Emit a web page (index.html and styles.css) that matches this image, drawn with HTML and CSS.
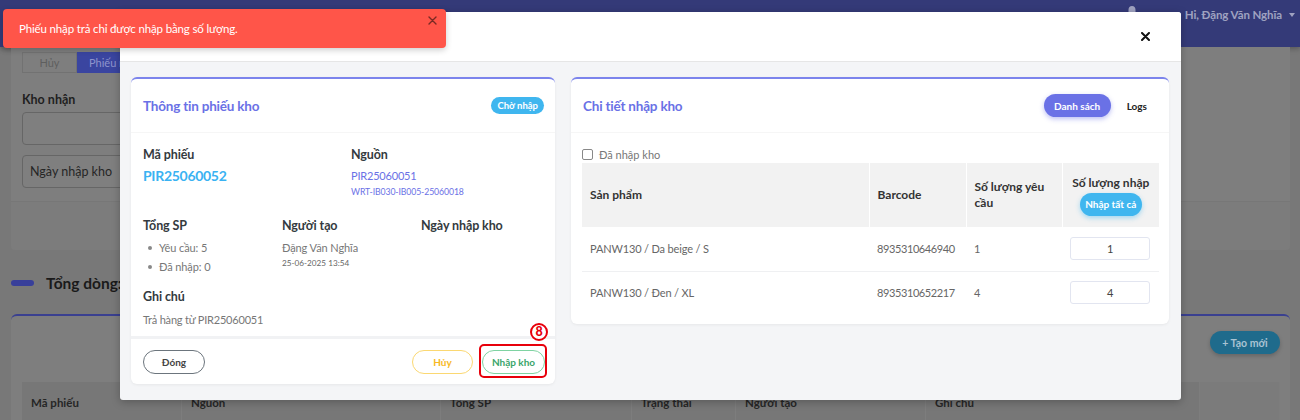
FILE: index.html
```html
<!DOCTYPE html>
<html lang="vi">
<head>
<meta charset="utf-8">
<title>Phiếu nhập kho</title>
<link rel="stylesheet" href="styles.css">
</head>
<body>
<div class="app">
  <header class="navbar">
    <svg class="nav-bell" width="12" height="14" viewBox="0 0 12 14"><path d="M6 1C3.8 1 2.5 2.7 2.5 4.8V8L1 10.5H11L9.5 8V4.8C9.5 2.7 8.2 1 6 1Z" fill="#9fa2c0"/><circle cx="6" cy="12" r="1.5" fill="#9fa2c0"/></svg>
    <div class="nav-user">Hi, Đặng Văn Nghĩa <span class="caret"></span></div>
  </header>
  <main class="content">
    <section class="filter-card">
      <div class="tabs">
        <button class="tab">Hủy</button>
        <button class="tab active">Phiếu nhập trả</button>
      </div>
      <div class="f-label">Kho nhận</div>
      <div class="f-input"></div>
      <div class="f-input">Ngày nhập kho</div>
    </section>
    <div class="total-row"><span class="pill"></span><span class="total-text">Tổng dòng: 2</span></div>
    <section class="list-card">
      <div class="list-tools"><button class="btn-new">+ Tạo mới</button></div>
      <div class="bg-table">
        <div class="bg-th w1">Mã phiếu</div>
        <div class="bg-th w2">Nguồn</div>
        <div class="bg-th w3">Tổng SP</div>
        <div class="bg-th w4">Trạng thái</div>
        <div class="bg-th w5">Người tạo</div>
        <div class="bg-th w6">Ghi chú</div>
        <div class="bg-th w7"></div>
      </div>
    </section>
  </main>
</div>

<div class="modal">
  <div class="modal-header">
    <button class="modal-close" aria-label="Đóng">
      <svg width="9" height="9" viewBox="0 0 9 9"><path d="M1 1L8 8M8 1L1 8" stroke="#111" stroke-width="2" stroke-linecap="round"/></svg>
    </button>
  </div>
  <div class="modal-body">
    <section class="card info-card">
      <div class="card-header">
        <h3 class="card-title">Thông tin phiếu kho</h3>
        <span class="badge">Chờ nhập</span>
      </div>
      <div class="card-body">
        <div class="row2">
          <div class="field">
            <div class="label">Mã phiếu</div>
            <div class="code-big">PIR25060052</div>
          </div>
          <div class="field">
            <div class="label">Nguồn</div>
            <div class="src-code">PIR25060051</div>
            <div class="src-sub">WRT-IB030-IB005-25060018</div>
          </div>
        </div>
        <div class="row3">
          <div class="field">
            <div class="label">Tổng SP</div>
            <ul class="bullets">
              <li>Yêu cầu: 5</li>
              <li>Đã nhập: 0</li>
            </ul>
          </div>
          <div class="field">
            <div class="label">Người tạo</div>
            <div class="creator">Đặng Văn Nghĩa</div>
            <div class="created-at">25-06-2025 13:54</div>
          </div>
          <div class="field">
            <div class="label">Ngày nhập kho</div>
          </div>
        </div>
        <div class="field note">
          <div class="label">Ghi chú</div>
          <div class="note-text">Trả hàng từ PIR25060051</div>
        </div>
      </div>
      <div class="card-footer">
        <button class="obtn obtn-grey">Đóng</button>
        <div class="footer-right">
          <button class="obtn obtn-yellow">Hủy</button>
          <button class="obtn obtn-green">Nhập kho</button>
        </div>
        <span class="mark-box"></span>
        <span class="mark-num">8</span>
      </div>
    </section>

    <section class="card detail-card">
      <div class="card-header">
        <h3 class="card-title">Chi tiết nhập kho</h3>
        <div class="seg">
          <button class="seg-btn active">Danh sách</button>
          <button class="seg-btn">Logs</button>
        </div>
      </div>
      <div class="card-body detail-body">
        <label class="check"><span class="box"></span>Đã nhập kho</label>
        <table class="dtable">
          <colgroup><col class="c1"><col class="c2"><col class="c3"><col class="c4"></colgroup>
          <thead>
            <tr>
              <th>Sản phẩm</th>
              <th>Barcode</th>
              <th>Số lượng yêu<br>cầu</th>
              <th class="th-qty">Số lượng nhập<br><button class="btn-all">Nhập tất cả</button></th>
            </tr>
          </thead>
          <tbody>
            <tr>
              <td>PANW130 / Da beige / S</td>
              <td class="num">8935310646940</td>
              <td>1</td>
              <td><div class="qty">1</div></td>
            </tr>
            <tr>
              <td>PANW130 / Đen / XL</td>
              <td class="num">8935310652217</td>
              <td>4</td>
              <td><div class="qty">4</div></td>
            </tr>
          </tbody>
        </table>
      </div>
    </section>
  </div>
</div>

<div class="toast">
  <span class="toast-text">Phiếu nhập trả chỉ được nhập bằng số lượng.</span>
  <span class="toast-x">
    <svg width="9" height="9" viewBox="0 0 9 9"><path d="M1 1L8 8M8 1L1 8" stroke="#7a2a24" stroke-width="1.4" stroke-linecap="round"/></svg>
  </span>
</div>
</body>
</html>
```

FILE: styles.css
```css
* { box-sizing: border-box; margin: 0; padding: 0; }
html, body { width: 1300px; height: 420px; overflow: hidden; }
body {
  font-family: Lato, "Noto Sans", "DejaVu Sans", sans-serif;
  background: #787878;
  color: #333;
  position: relative;
}
button { font-family: inherit; border: 0; background: none; cursor: pointer; }

/* ---------- dimmed background page ---------- */
.navbar {
  height: 47px;
  background: #343a78;
  display: flex;
  justify-content: flex-end;
  align-items: flex-start;
  padding: 7px 5px 0 0;
  box-shadow: 0 2px 5px rgba(0,0,0,.25);
}
.nav-bell { margin: -2px 47px 0 0; }
.nav-user { display: flex; align-items: center; gap: 7px; color: #9fa2c0; font-size: 11.5px; font-weight: 700; line-height: 16px; letter-spacing: -0.1px; }
.caret { width: 0; height: 0; border-left: 3px solid transparent; border-right: 3px solid transparent; border-top: 4px solid #9fa2c0; }

.content { padding: 0 10px 0 11px; }
.filter-card {
  background: #7e7e7e;
  height: 203px;
  border-radius: 0 0 4px 4px;
  padding: 5px 11px 0;
  background-image: linear-gradient(#7e7e7e 154px, #777 154px, #777 155px, #7c7c7c 155px);
}
.tabs { display: flex; height: 21px; }
.tab { width: 55px; border: 1px solid #727272; color: #5e5e5e; font-size: 11px; background: #7e7e7e; }
.tab.active { width: 100px; background: #3a45a0; color: #8e94cc; border-color: #3a45a0; text-align: left; padding-left: 11px; white-space: nowrap; }
.f-label { margin-top: 19px; font-size: 12.5px; font-weight: 700; color: #1f1f1f; line-height: 16px; }
.f-input { width: 420px; margin-top: 4px; height: 33px; border: 1px solid #666; border-radius: 4px; background: #7f7f7f; color: #262626; font-size: 12.5px; padding-left: 7px; display: flex; align-items: center; }
.f-input + .f-input { margin-top: 10px; }

.total-row { display: flex; align-items: center; gap: 12px; height: 20px; margin-top: 23px; }
.pill { width: 23px; height: 6px; border-radius: 3px; background: #383f9a; }
.total-text { font-size: 15.5px; font-weight: 700; color: #1a1a1a; }

.list-card {
  margin-top: 21px;
  background: #7e7e7e;
  border-top: 2px solid #3a4090;
  border-radius: 6px 6px 0 0;
  height: 200px;
  padding: 15px 10px 0 11px;
}
.list-tools { display: flex; justify-content: flex-end; height: 23px; }
.btn-new { width: 70px; height: 23px; border-radius: 12px; background: #1f6b8c; color: #a9c3d3; font-size: 10.5px; font-weight: 700; box-shadow: 0 2px 4px rgba(0,0,0,.2); }
.bg-table { margin-top: 28px; display: flex; background: #777; height: 45px; }
.bg-th { padding: 14px 0 0 9px; font-size: 11.5px; font-weight: 700; color: #262626; border-right: 1px solid #7d7d7d; }
.w1 { width: 160px; } .w2 { width: 259px; } .w3 { width: 191px; } .w4 { width: 104px; } .w5 { width: 190px; } .w6 { width: 274px; } .w7 { width: 80px; background: #7b7b7b; }

/* ---------- modal ---------- */
.modal {
  position: absolute;
  left: 120px; top: 12px;
  width: 1061px; height: 388px;
  background: #f4f5f7;
  border-radius: 3px;
  overflow: hidden;
  box-shadow: 0 2px 8px rgba(0,0,0,.25);
}
.modal-header {
  height: 50px;
  background: #fff;
  border-bottom: 1px solid #e6e6e6;
  display: flex;
  justify-content: flex-end;
  align-items: center;
  padding-right: 31px;
}
.modal-close { width: 10px; height: 10px; display: flex; align-items: center; justify-content: center; }
.modal-body {
  display: grid;
  grid-template-columns: 424px 598px;
  gap: 16px;
  align-items: start;
  padding: 15px 0 0 11px;
}

.card {
  background: #fff;
  border-top: 2px solid #7c84ec;
  border-radius: 6px;
  box-shadow: 0 1px 3px rgba(0,0,0,.06);
  position: relative;
}
.card-header {
  height: 54px;
  display: flex;
  justify-content: space-between;
  align-items: center;
  padding: 0 11px 0 12px;
  border-bottom: 1px solid #f6f6f6;
}
.card-title { font-size: 13.5px; font-weight: 700; color: #6a71e6; letter-spacing: -0.2px; }
.badge { background: #3fb6ef; color: #fff; font-size: 9.5px; font-weight: 700; height: 17px; padding: 0 6px; border-radius: 9px; display: flex; align-items: center; }

.card-body { padding: 13px 12px 7px; }
.label { font-size: 12.5px; font-weight: 700; color: #343a40; line-height: 18px; letter-spacing: -0.1px; }
.row2 { display: grid; grid-template-columns: 208px 1fr; }
.code-big { margin-top: 1px; font-size: 14px; font-weight: 700; color: #3ab2f2; line-height: 22px; letter-spacing: -0.3px; }
.src-code { margin-top: 3px; font-size: 11px; color: #6a71e6; line-height: 18px; letter-spacing: -0.2px; }
.src-sub { font-size: 8.7px; color: #6a71e6; line-height: 14px; letter-spacing: -0.1px; }
.row3 { display: grid; grid-template-columns: 139px 139px 1fr; margin-top: 18px; }
.bullets { margin-top: 3px; list-style: none; }
.bullets li { font-size: 11px; color: #777; line-height: 19px; padding-left: 16px; position: relative; letter-spacing: -0.1px; }
.bullets li::before { content: ""; position: absolute; left: 5px; top: 8px; width: 4px; height: 4px; border-radius: 50%; background: #888; }
.creator { margin-top: 5px; font-size: 11px; color: #777; line-height: 16px; letter-spacing: -0.1px; }
.created-at { font-size: 8.2px; color: #666; line-height: 14px; }
.note { margin-top: 12px; }
.note-text { margin-top: 5px; font-size: 11px; color: #777; line-height: 18px; letter-spacing: -0.2px; }

.card-footer {
  border-top: 3px solid #f1f2f4;
  height: 48px;
  display: flex;
  justify-content: space-between;
  align-items: center;
  padding: 0 10px 0 12px;
  position: relative;
}
.footer-right { display: flex; gap: 9px; }
.obtn { height: 24px; border-radius: 12px; font-size: 10px; font-weight: 700; background: #fff; }
.obtn-grey { width: 62px; border: 1px solid #6c757d; color: #444; }
.obtn-yellow { width: 61px; border: 1px solid #fbd872; color: #f7b924; }
.obtn-green { width: 63px; border: 1px solid #7fd3a2; color: #3aa56a; }
.mark-box { position: absolute; right: 8px; top: 5px; width: 68px; height: 34px; border: 2px solid #e8000b; border-radius: 5px; }
.mark-num { position: absolute; right: 7px; top: -16px; width: 18px; height: 18px; border: 2px solid #e8000b; border-radius: 50%; color: #e8000b; font-size: 12.5px; font-weight: 900; display: flex; align-items: center; justify-content: center; background: #fff; line-height: 1; }

/* detail card */
.seg { display: flex; align-items: center; gap: 3px; margin-right: -2px; }
.seg-btn { height: 23px; font-size: 10px; font-weight: 700; color: #222; border-radius: 12px; padding: 0 13px; }
.seg-btn.active { width: 67px; padding: 0; background: #6a71e6; color: #fff; box-shadow: 0 2px 5px rgba(106,113,230,.45); }
.detail-body { padding: 13px 10px 10px 11px; }
.check { display: flex; align-items: center; gap: 6px; height: 17px; font-size: 11px; color: #777; }
.box { width: 11px; height: 11px; border: 1px solid #888; border-radius: 2px; }
.dtable { width: 577px; border-collapse: collapse; table-layout: fixed; }
.c1 { width: 287px; } .c2 { width: 97px; } .c3 { width: 96px; } .c4 { width: 97px; }
.dtable th { background: #f2f2f2; height: 64px; text-align: left; font-size: 12px; font-weight: 700; color: #333; padding: 0 8px 0 8px; border-left: 1px solid #fff; line-height: 16px; vertical-align: middle; }
.dtable th:first-child { border-left: 0; }
.dtable th.th-qty { text-align: center; padding: 0; }
.btn-all { margin-top: 2px; width: 62px; height: 23px; border-radius: 12px; background: #3fb6ef; color: #fff; font-size: 10px; font-weight: 700; box-shadow: 0 2px 5px rgba(63,182,239,.45); }
.dtable td { height: 44px; font-size: 11px; color: #666; padding: 0 8px; border-bottom: 1px solid #eff0f2; vertical-align: middle; letter-spacing: -0.15px; }
.dtable td.num { letter-spacing: -0.4px; }
.dtable tr:last-child td { border-bottom: 0; height: 43px; }
.qty { width: 80px; height: 23px; border: 1px solid #e2e5f0; border-radius: 3px; display: flex; align-items: center; justify-content: center; color: #444; font-size: 11px; }

/* ---------- toast ---------- */
.toast {
  position: absolute;
  left: 3px; top: 9px;
  width: 443px; height: 39px;
  background: #ff5549;
  border-radius: 4px;
  box-shadow: 0 2px 6px rgba(0,0,0,.2);
  display: flex;
  align-items: center;
  padding-left: 16px;
}
.toast-text { color: #fff; font-size: 11.5px; letter-spacing: -0.15px; }
.toast-x { position: absolute; right: 9px; top: 7px; display: flex; }
```
